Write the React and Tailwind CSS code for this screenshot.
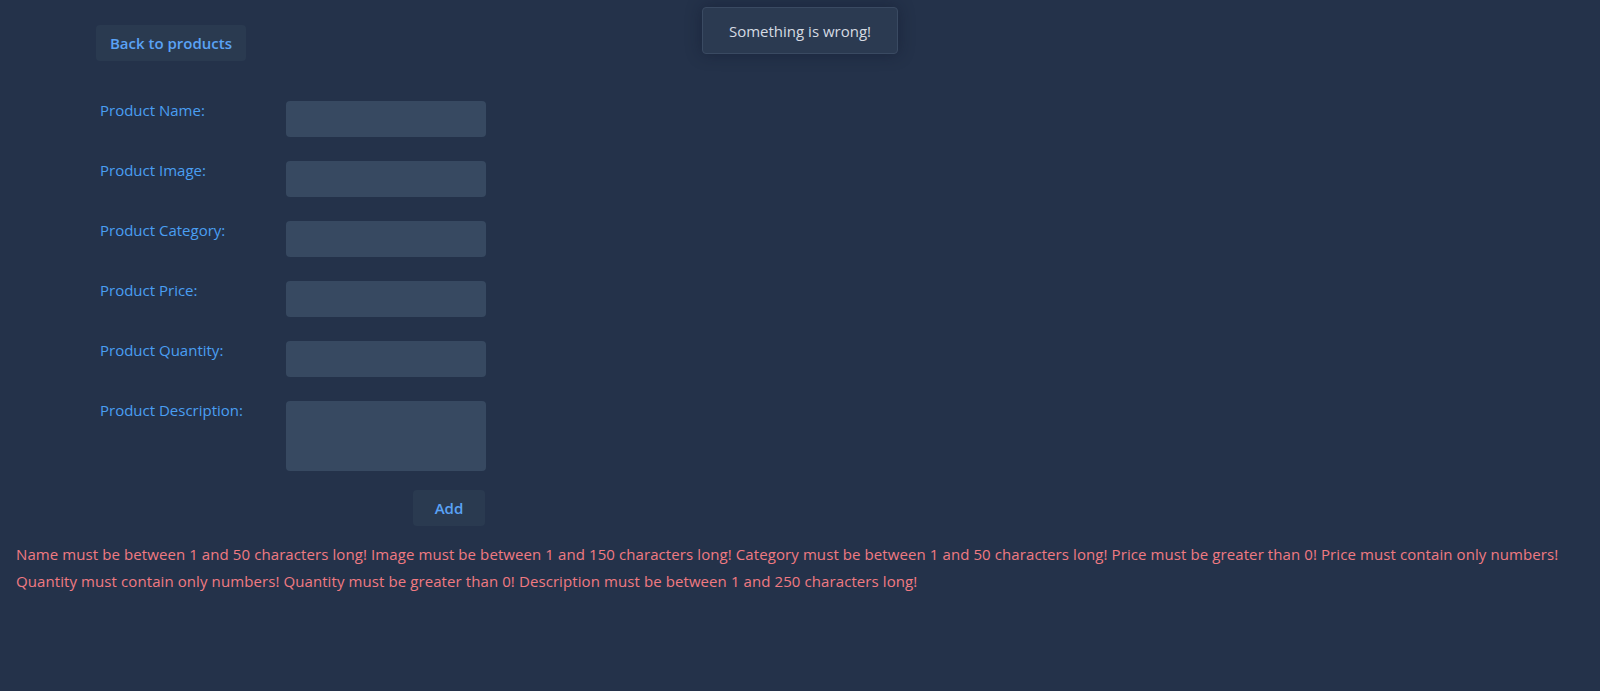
export default function App() {
  const fields = [
    "Product Name:",
    "Product Image:",
    "Product Category:",
    "Product Price:",
    "Product Quantity:",
  ];
  return (
    <div
      className="min-h-screen w-full bg-[#24324a] relative"
      style={{ fontFamily: '"Open Sans", "Noto Sans", sans-serif' }}
    >
      <div className="absolute left-1/2 top-[7px] -translate-x-1/2 w-[196px] h-[47px] flex items-center justify-center rounded-[4px] border border-[#3a4a62] bg-[#2b3a51] text-[15px] text-[#d5dae2] pt-[1px] shadow-[0_0_16px_rgba(15,23,42,0.45)]">
        Something is wrong!
      </div>
      <div className="pt-[25px] pl-[96px]">
        <button className="h-[36px] w-[150px] rounded-[4px] bg-[#2a3a50] text-[15px] font-semibold text-[#5aa2f5]">
          Back to products
        </button>
      </div>
      <form className="pl-[100px] pt-[40px] w-[386px] box-content flex flex-col">
        {fields.map((f) => (
          <div key={f} className="flex h-[60px]">
            <label className="w-[186px] text-[15px] leading-[20px] text-[#4a9ff2] -mt-[1px]">{f}</label>
            <div className="w-[200px] h-[36px] rounded-[4px] bg-[#374961]" />
          </div>
        ))}
        <div className="flex">
          <label className="w-[186px] text-[15px] leading-[20px] text-[#4a9ff2] -mt-[1px]">Product Description:</label>
          <div className="w-[200px] h-[70px] rounded-[4px] bg-[#374961]" />
        </div>
        <div className="flex justify-end pt-[19px] pr-[1px]">
          <button type="button" className="h-[36px] w-[72px] rounded-[4px] bg-[#2a3a50] text-[15px] font-semibold text-[#5aa2f5]">
            Add
          </button>
        </div>
      </form>
      <p className="px-[16px] pt-[15px] text-[15px] leading-[27px] tracking-[0.09px] text-[#f07a82]">
        Name must be between 1 and 50 characters long! Image must be between 1 and 150 characters long! Category must be between 1 and 50 characters long! Price must be greater than 0! Price must contain only numbers! Quantity must contain only numbers! Quantity must be greater than 0! Description must be between 1 and 250 characters long!
      </p>
    </div>
  );
}
